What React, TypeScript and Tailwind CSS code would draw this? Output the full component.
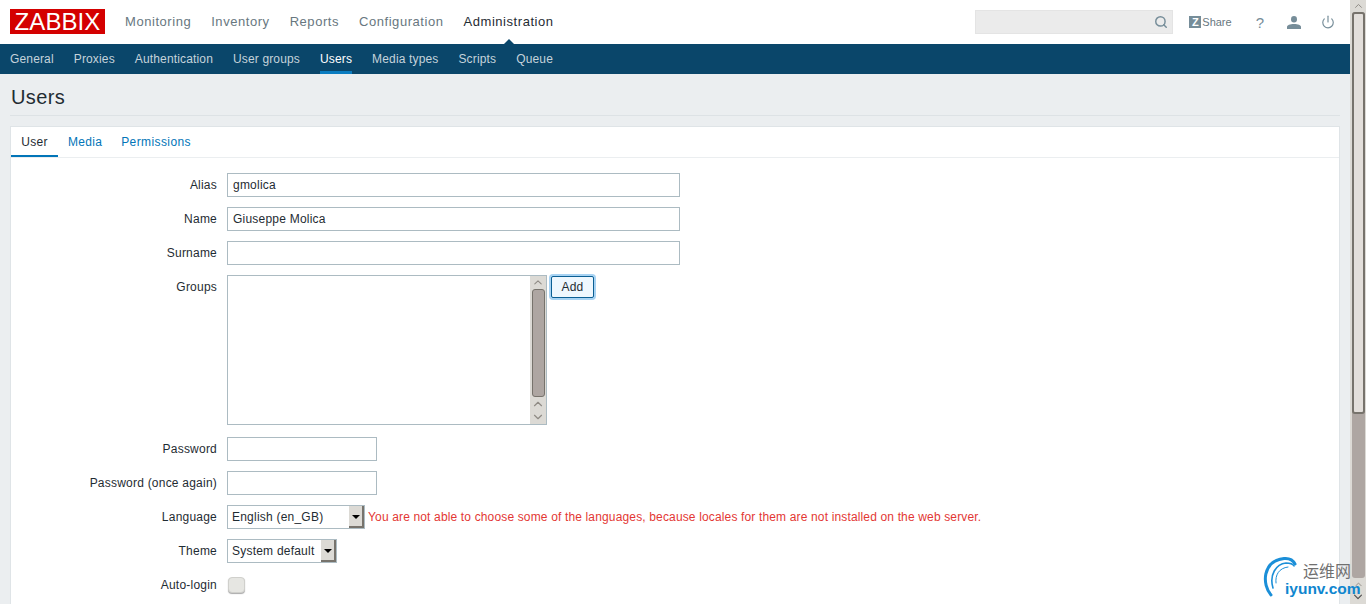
import type { ReactNode } from "react";
import { Search, Power, ChevronUp, ChevronDown } from "lucide-react";

const mainNav = ["Monitoring", "Inventory", "Reports", "Configuration", "Administration"];
const subNav = ["General", "Proxies", "Authentication", "User groups", "Users", "Media types", "Scripts", "Queue"];

function Row({ label, children, className = "" }: { label: string; children: ReactNode; className?: string }) {
  return (
    <div className={`flex items-start ${className}`}>
      <label className="w-[216px] shrink-0 pr-[10px] text-right leading-[24px] text-[#1f2c33]">{label}</label>
      {children}
    </div>
  );
}

function TextBox({ value = "", width }: { value?: string; width: string }) {
  return (
    <input
      readOnly
      value={value}
      className={`${width} h-[24px] border border-[#acbbc2] bg-white px-[5px] text-[#1f2c33] outline-none`}
    />
  );
}

function Select({ value, width }: { value: string; width: string }) {
  return (
    <div className={`${width} flex h-[24px] items-stretch border border-[#acbbc2] bg-white`}>
      <span className="flex-1 pl-[4px] leading-[22px] text-[#1f2c33]">{value}</span>
      <span className="flex w-[15px] items-center justify-center border-r-2 border-b-2 border-[#77736c] bg-[#dcdad5]">
        <span className="mt-[1px] h-0 w-0 border-x-[4px] border-t-[4px] border-x-transparent border-t-black" />
      </span>
    </div>
  );
}

export default function App() {
  return (
    <div className="flex h-[604px] w-[1366px] overflow-hidden bg-[#ebeef0] font-['Liberation_Sans',Arial,sans-serif] text-[12px] tracking-[0.22px]">
      <div className="relative z-10 w-[1350px] shrink-0">
        {/* top header */}
        <header className="flex h-[44px] items-center bg-white pl-[10px]">
          <div className="mb-px flex h-[25px] w-[95px] items-center justify-center bg-[#d40000] text-[24px] leading-none tracking-[0.1px] text-white">
            ZABBIX
          </div>
          <nav className="ml-[20px] flex gap-[20px] text-[13px] tracking-[0.55px]">
            {mainNav.map((item) => (
              <a key={item} className={item === "Administration" ? "relative text-[#1f2c33]" : "text-[#687780]"}>
                {item}
                {item === "Administration" && (
                  <span className="absolute bottom-[-15px] left-[37px] h-0 w-0 border-x-[8px] border-b-[8px] border-x-transparent border-b-[#0a466a]" />
                )}
              </a>
            ))}
          </nav>
          <div className="ml-auto flex items-center pr-[15px] text-[#768d99]">
            <div className="flex h-[24px] w-[198px] items-center justify-end border border-[#e4e4e4] bg-[#ebebeb] pr-[4px]">
              <Search size={14} strokeWidth={2.5} />
            </div>
            <div className="ml-[16px] flex items-center">
              <span className="flex h-[12px] w-[12px] items-center justify-center bg-[#768d99] text-[11px] font-bold leading-none tracking-normal text-white">
                Z
              </span>
              <span className="ml-[1px] text-[11px] tracking-normal text-[#687780]">Share</span>
            </div>
            <span className="ml-[24px] text-[15px] leading-none tracking-normal">?</span>
            <svg width="14" height="13" viewBox="0 0 14 13" fill="currentColor" className="ml-[23px]">
              <ellipse cx="7" cy="3.2" rx="3" ry="3.2" />
              <path d="M0 13V11C0 9 3 8 7 8s7 1 7 3v2Z" />
            </svg>
            <Power size={14} strokeWidth={2} className="ml-[20px]" />
          </div>
        </header>

        {/* sub navigation */}
        <nav className="flex h-[30px] gap-[20px] bg-[#0a466a] px-[10px] tracking-[0.15px]">
          {subNav.map((item) => (
            <a
              key={item}
              className={
                item === "Users"
                  ? "border-b-[3px] border-[#0b7cc0] leading-[30px] text-white"
                  : "leading-[30px] text-[#c5d3db]"
              }
            >
              {item}
            </a>
          ))}
        </nav>

        <div className="mx-[10px] flex h-[42px] items-center border-b border-[#dde2e5] pt-[4px] pl-px text-[20px] leading-none tracking-[0.4px] text-[#1f2c33]">
          Users
        </div>

        {/* form card */}
        <div className="mx-[10px] mt-[10px] h-[600px] border border-[#dfe4e7] bg-white">
          <div className="flex h-[31px] border-b border-[#ebeef0] text-[#0275b8] tracking-[0.3px]">
            <a className="w-[47px] border-b-2 border-[#0275b8] text-center leading-[30px] text-[#1f2c33]">User</a>
            <a className="ml-[10px] leading-[30px]">Media</a>
            <a className="ml-[19px] leading-[30px] tracking-[0.4px]">Permissions</a>
          </div>
          <div className="mt-[15px] flex flex-col gap-[10px]">
            <Row label="Alias"><TextBox value="gmolica" width="w-[453px]" /></Row>
            <Row label="Name"><TextBox value="Giuseppe Molica" width="w-[453px]" /></Row>
            <Row label="Surname"><TextBox width="w-[453px]" /></Row>
            <Row label="Groups">
              <div className="flex h-[150px] w-[320px] justify-end border border-[#acbbc2] bg-white">
                <div className="flex w-[16px] flex-col items-center bg-[#dcdad5] text-[#8f8b85]">
                  <ChevronUp size={14} className="h-[13px]" />
                  <div className="h-[110px] w-[13px] rounded-[3px] border border-[#77736c] bg-[#aea6a2]" />
                  <div className="mt-auto flex flex-col">
                    <ChevronUp size={14} />
                    <ChevronDown size={14} className="mt-[-1px]" />
                  </div>
                </div>
              </div>
              <button className="mt-px ml-[4px] h-[22px] w-[43px] rounded-[2px] border border-[#0b5f94] bg-[#eef7fe] text-[#1f2c33] shadow-[0_0_0_2px_#a8d3f3]">
                Add
              </button>
            </Row>
            <Row label="Password" className="mt-[2px]"><TextBox width="w-[150px]" /></Row>
            <Row label="Password (once again)"><TextBox width="w-[150px]" /></Row>
            <Row label="Language">
              <Select value="English (en_GB)" width="w-[138px]" />
              <span className="ml-[3px] leading-[24px] tracking-[0.15px] text-[#e33734]">
                You are not able to choose some of the languages, because locales for them are not installed on the web server.
              </span>
            </Row>
            <Row label="Theme"><Select value="System default" width="w-[110px]" /></Row>
            <Row label="Auto-login">
              <div className="mt-[4px] ml-px h-[16px] w-[17px] rounded-[4px] border border-[#d0d0cc] bg-[#e6e6e2] shadow-[0_1px_1px_#aaa]" />
            </Row>
          </div>
        </div>

        {/* watermark */}
        <div className="absolute top-[555px] left-[1262px] h-[46px] w-[104px] tracking-normal">
          <svg width="40" height="44" viewBox="0 0 40 44" className="absolute top-0 left-0" fill="none" stroke="#1b8fd8" strokeLinecap="round">
            <path d="M9 40C0 30 0 6 22 3.5C27 3 31 5 33 9" strokeWidth="3" />
            <path d="M11 33C7 20 14 9 24 8C28 8 31 9 32 11" strokeWidth="1.6" />
            <path d="M14 28C13 20 17 13 26 12" strokeWidth="1" />
          </svg>
          <span className="absolute top-[6px] left-[41px] font-['Noto_Sans_CJK_SC',sans-serif] text-[16px] leading-[18px] text-[#707070]">
            运维网
          </span>
          <span className="absolute top-[25px] left-[23px] text-[15.5px] leading-[18px] font-bold whitespace-nowrap text-[#0f86cf]">
            iyunv.com
          </span>
        </div>
      </div>

      {/* browser scrollbar */}
      <div className="flex w-[16px] shrink-0 flex-col items-center bg-[#dcdad5] text-[#8f8b85]">
        <ChevronUp size={13} className="h-[12px]" />
        <div className="h-[575px] w-[13px] rounded-[3px] bg-[#aea6a2]">
          <div className="h-[402px] rounded-[3px] border-2 border-[#77736c] bg-[#e3dfdb]" />
        </div>
        <ChevronUp size={13} className="mt-[1px] h-[11px]" />
        <ChevronDown size={14} className="text-[#4d4d4d]" />
      </div>
    </div>
  );
}
